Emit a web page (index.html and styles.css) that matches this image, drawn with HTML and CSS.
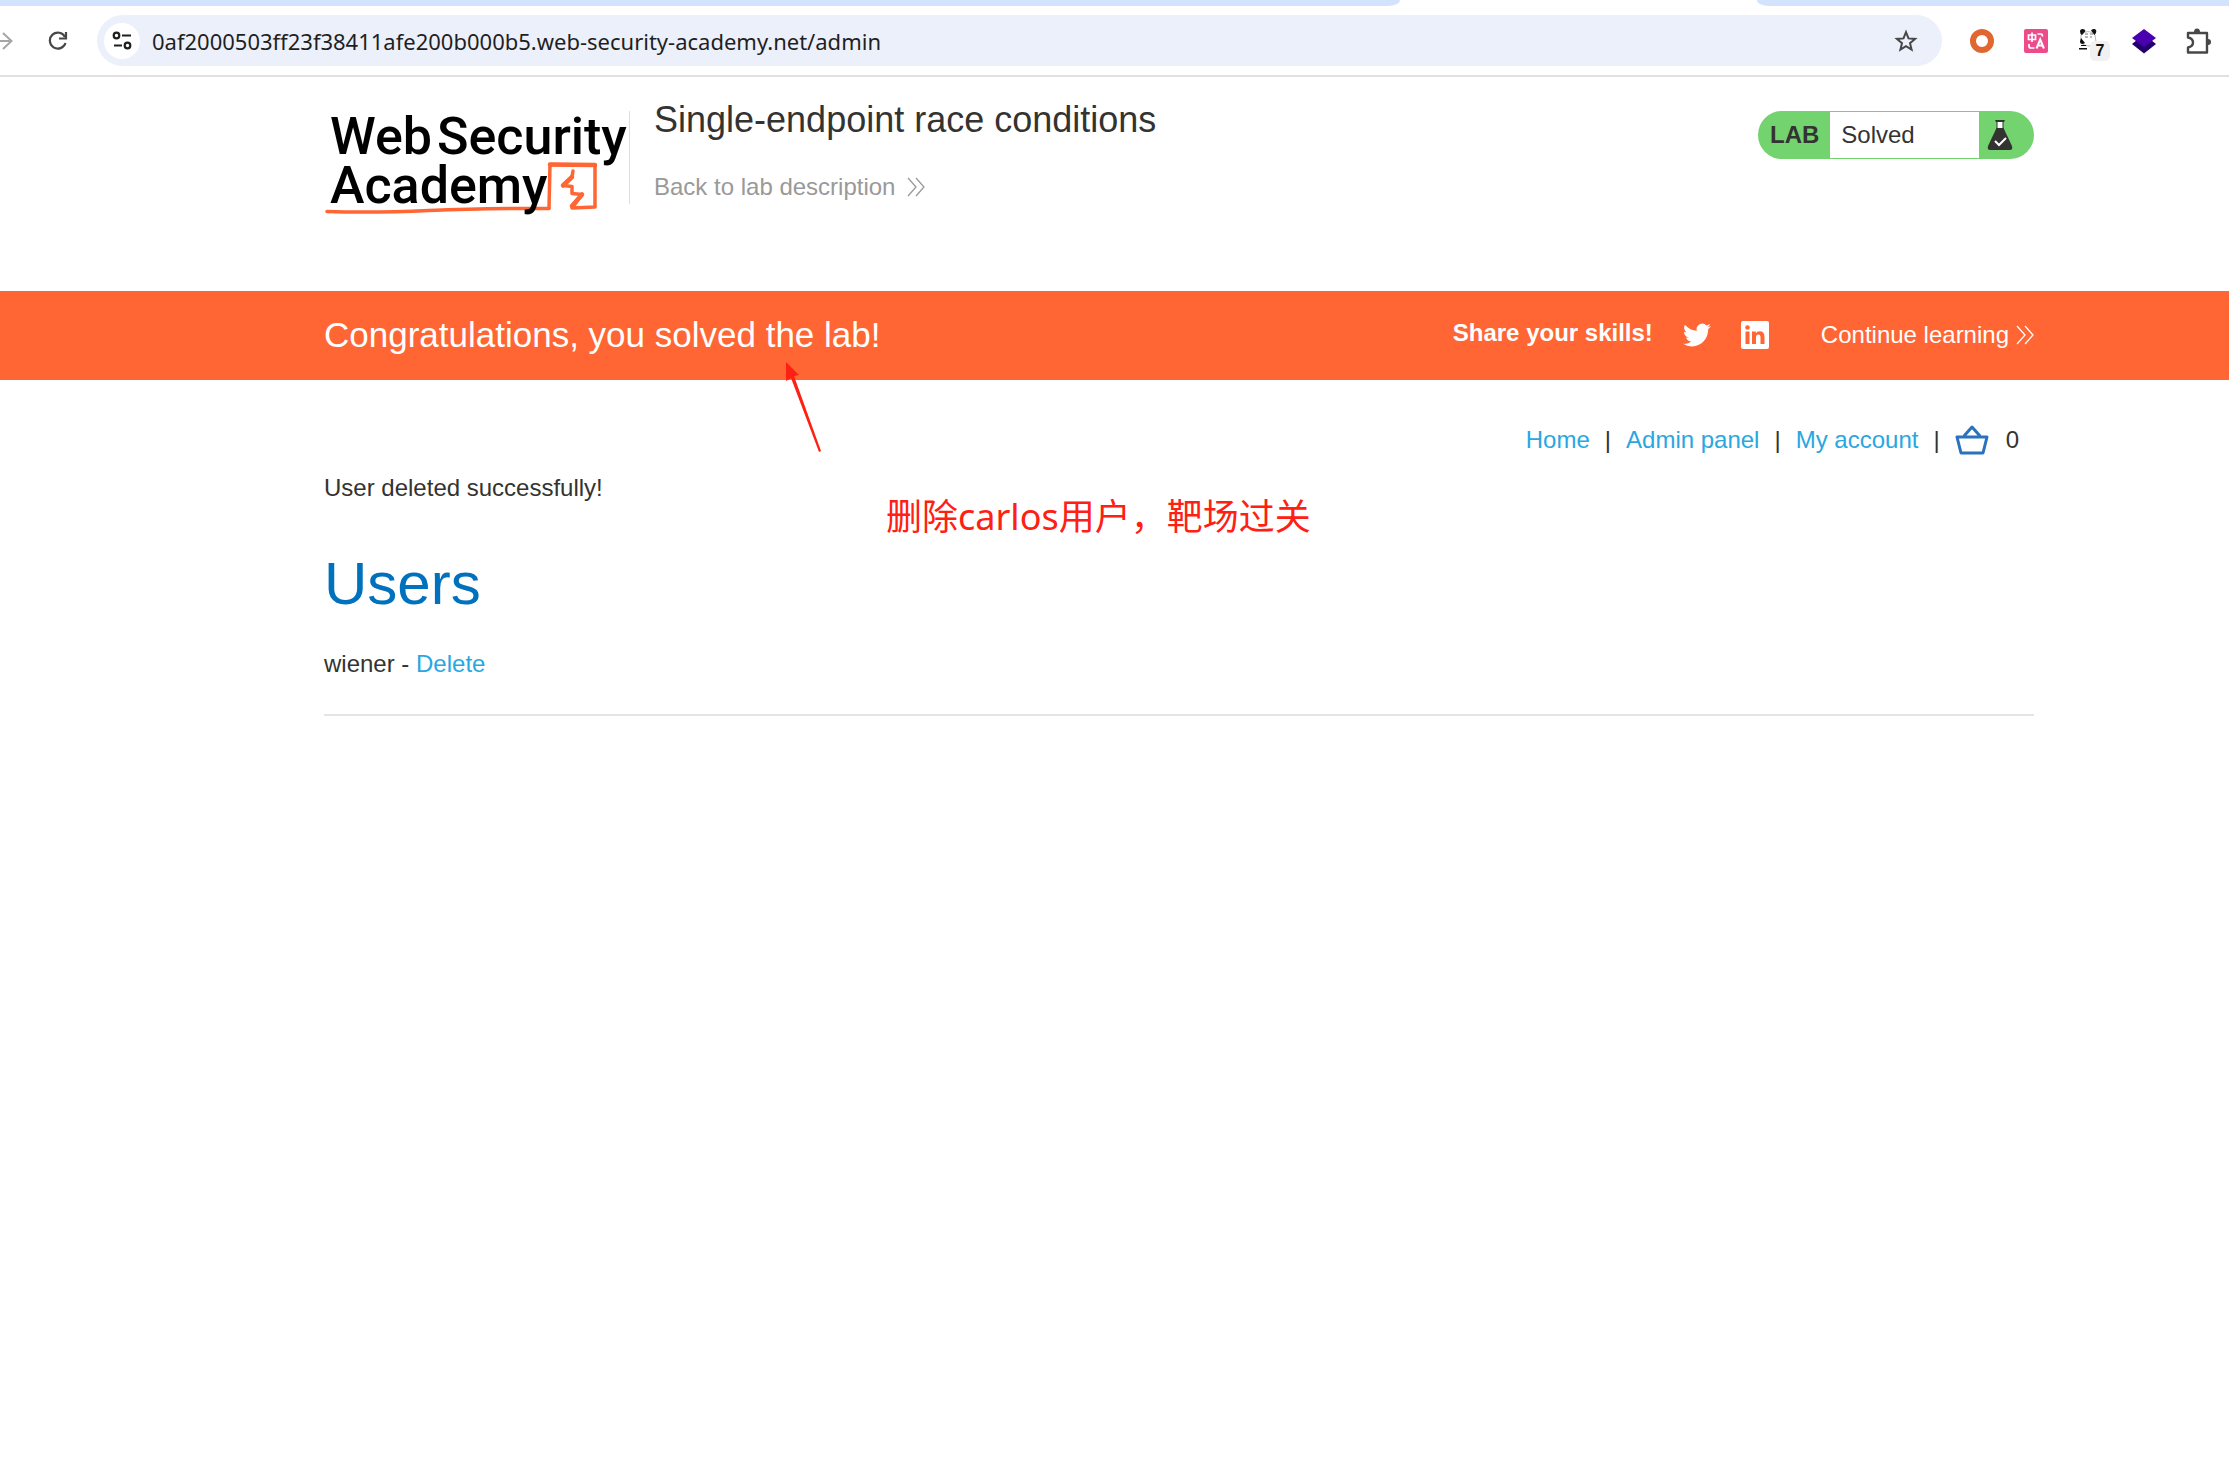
FILE: index.html
```html
<!DOCTYPE html>
<html lang="en">
<head>
    <meta charset="UTF-8">
    <meta name="viewport" content="width=device-width, initial-scale=1.0">
    <title>Single-endpoint race conditions</title>
    <link rel="stylesheet" href="styles.css">
</head>
<body>
    <div class="browser">
        <div class="tab-strip">
            <div class="tabs-before"></div>
            <div class="tabs-current"></div>
            <div class="tabs-after"></div>
        </div>
        <div class="toolbar">
            <button class="tool forward" aria-label="Forward">
                <svg width="14" height="20" viewBox="0 0 14 20" fill="none" stroke="#a6a6a6" stroke-width="2"><path d="M0 10h12M3 2l8.500 8L3 18"/></svg>
            </button>
            <button class="tool reload" aria-label="Reload">
                <svg width="20" height="20" viewBox="0 0 20 20" fill="none" stroke="#474747" stroke-width="2.200"><path d="M17 6A8 8 0 1 0 17.500 12"/><path d="M18 1v6.500h-7"/></svg>
            </button>
            <div class="address">
                <button class="site-info" aria-label="Site information">
                    <svg width="20" height="20" viewBox="0 0 20 20" fill="none" stroke="#1f1f1f" stroke-width="2.200"><circle cx="4.500" cy="4.500" r="2.800"/><path d="M10 4.500h9M2 14.500h8"/><circle cx="15.500" cy="14.500" r="2.800"/></svg>
                </button>
                <input class="url" type="text" aria-label="Address" value="0af2000503ff23f38411afe200b000b5.web-security-academy.net/admin">
                <button class="tool" aria-label="Bookmark this page">
                    <svg width="24" height="24" viewBox="0 0 24 24" fill="none" stroke="#474747" stroke-width="2"><path d="M12 3.200l2.500 6.200 6.600.5-5.100 4.300 1.600 6.500L12 17.200l-5.600 3.500L8 14.200 2.900 9.900l6.600-.5z"/></svg>
                </button>
            </div>
            <div class="extensions">
                <button class="extension" aria-label="Proxy">
                    <svg width="24" height="24" viewBox="0 0 24 24"><circle cx="12" cy="12" r="9" fill="none" stroke="#e0672f" stroke-width="6"/></svg>
                </button>
                <button class="extension" aria-label="Translate">
                    <svg width="24" height="24" viewBox="0 0 24 24"><rect width="24" height="24" rx="2" fill="#ee4b8b"/><g fill="none" stroke="#fff" stroke-width="1.700"><path d="M4.500 6h7v4.500h-7zM8 3.500v9.500M13.500 5h3.500q1.500 0 1.500 2.500M5 15v2q0 2 2 2h3.500"/><path d="M12.500 19.500l3.700-9 3.700 9M13.800 16.500h4.800" stroke-width="2"/></g></svg>
                </button>
                <button class="extension" aria-label="Panda, 7 items">
                    <svg width="32" height="32" viewBox="0 0 32 32"><path d="M7 10q7-7 14 0l1 7q-3 4-7 4t-8-3z" fill="#fff" stroke="#bbb" stroke-width="1"/><g fill="#111"><path d="M6 6.500q0-2.500 2.500-2.500t3 2L8 10q-2-1-2-3.500zM17 5.500q1-2 3.500-1.500T22 8l-1.500 2zM7 13l4 5-2 1q-3 0-3-2.500z"/><path d="M7 20h5v1H7zM5 23h8v1.500H5z"/></g><path d="M11 9h3M16 9h3M11 12h3M16 12h2" stroke="#777"/></svg>
                    <span class="count">7</span>
                </button>
                <button class="extension" aria-label="Layers">
                    <svg width="26" height="26" viewBox="0 0 26 26"><path d="M1 16l5-4 14 0 5 4-12 9.500z" fill="#22006b"/><path d="M13 1l12 9-12 9L1 10z" fill="#4a00b0"/></svg>
                </button>
                <button class="extension" aria-label="Extensions">
                    <svg width="26" height="28" viewBox="0 0 26 28"><path d="M3 6h19v19.500H3v-5q5-1 5-5t-5-5z" fill="none" stroke="#474747" stroke-width="2.400" stroke-linejoin="round"/><path d="M9 5a3 3.500 0 0 1 6 0zM23 12a3 3 0 0 1 0 6z" fill="#474747"/></svg>
                </button>
            </div>
        </div>
    </div>

    <header class="lab-header">
        <a href="#" class="logo" aria-label="Web Security Academy">
            <svg width="304" height="120" viewBox="0 -12 304 120">
                <g fill="none" stroke="#ff6633" stroke-linejoin="round" stroke-linecap="round">
                    <path d="M3 100.500Q50 102 105 99.500T225 97.500" stroke-width="3.500"/>
                    <path d="M225 97L226 53.500L271 54V96L248 97L258 83.500L248 82.500L248 75.500L239 74.500L248 66L249 60" stroke-width="3.500"/>
                    <path d="M226 53.500L271 54" stroke-width="4.500"/>
                    <path d="M239 74.500L248 66M248 95L258 83.500" stroke-width="4.500"/>
                </g>
                <g class="logo-text">
                    <text x="6" y="43">Web</text>
                    <text x="113" y="43">Security</text>
                    <text x="6" y="92">Academy</text>
                </g>
            </svg>
        </a>
        <div class="lab-title">
            <h2>Single-endpoint race conditions</h2>
            <a href="#" class="back">Back to lab description
                <svg width="18" height="20" viewBox="0 0 18 20" fill="none" stroke="#999" stroke-width="1.300"><path d="M1 1l8 9-8 9M9 1l8 9-8 9"/></svg>
            </a>
        </div>
        <div class="lab-status">
            <strong>LAB</strong>
            <span class="state">Solved</span>
            <svg width="26" height="32" viewBox="0 0 26 32"><path d="M10 3h6v8h-6z" fill="#fff"/><path d="M8 1h10l-1 2H9z" fill="#333332"/><path d="M10 2v8M16 2v8" fill="none" stroke="#333332" stroke-width="1"/><path d="M9.500 9h7L25 27q1 4-2 4H3q-3 0-2-4z" fill="#333332"/><path d="M8 22l4 4 7-7" fill="none" stroke="#fff" stroke-width="2"/></svg>
        </div>
    </header>

    <section class="banner">
        <h3>Congratulations, you solved the lab!</h3>
        <span class="share">Share your skills!</span>
        <a href="#" class="social" aria-label="Twitter">
            <svg width="28" height="28" viewBox="0 0 24 24" fill="#fff"><path d="M23.953 4.570a10 10 0 01-2.825.775 4.958 4.958 0 002.163-2.723c-.951.555-2.005.959-3.127 1.184a4.920 4.920 0 00-8.384 4.482C7.690 8.095 4.067 6.130 1.640 3.162a4.822 4.822 0 00-.666 2.475c0 1.710.870 3.213 2.188 4.096a4.904 4.904 0 01-2.228-.616v.060a4.923 4.923 0 003.946 4.827 4.996 4.996 0 01-2.212.085 4.936 4.936 0 004.604 3.417 9.867 9.867 0 01-6.102 2.105c-.390 0-.779-.023-1.170-.067a13.995 13.995 0 007.557 2.209c9.053 0 13.998-7.496 13.998-13.985 0-.210 0-.420-.015-.630A9.935 9.935 0 0024 4.590z"/></svg>
        </a>
        <a href="#" class="social" aria-label="LinkedIn">
            <svg width="28" height="28" viewBox="0 0 28 28"><rect width="28" height="28" rx="2" fill="#fff"/><g fill="#ff6633"><circle cx="6.500" cy="6.500" r="2.300"/><path d="M4.500 10.500h4V23h-4zM11 10.500h3.800v1.700q1.300-2 3.900-2 4.800 0 4.800 5.800v7h-4v-6.200q0-3.200-2.200-3.200-2.300 0-2.300 3.200V23h-4z"/></g></svg>
        </a>
        <a href="#" class="continue">Continue learning
            <svg width="18" height="20" viewBox="0 0 18 20" fill="none" stroke="#fff" stroke-width="1.300"><path d="M1 1l8 9-8 9M9 1l8 9-8 9"/></svg>
        </a>
    </section>

    <main class="page">
        <nav class="top-links">
            <a href="#">Home</a><span>|</span>
            <a href="#">Admin panel</a><span>|</span>
            <a href="#">My account</a><span>|</span>
            <a href="#" class="basket" aria-label="Basket">
                <svg width="34" height="30" viewBox="0 0 34 30" fill="none" stroke="#2b71bd" stroke-width="3" stroke-linejoin="round"><path d="M2 12h30l-4 16H6zM9 11l8-9 8 9"/></svg>
            </a>
            <span class="basket-count">0</span>
        </nav>
        <p class="message">User deleted successfully!</p>
        <h1>Users</h1>
        <div class="user">wiener - <a href="#">Delete</a></div>
        <hr>
    </main>

    <!-- red marker drawn over the page -->
    <svg class="arrow" width="38" height="94" viewBox="0 0 38 94"><path d="M1 1L14 14L9 15L36 90L34 91L6 17L1 20z" fill="#ff2014"/></svg>
    <div class="note" lang="zh">删除carlos用户，靶场过关</div>
</body>
</html>
```
FILE: styles.css
```css
body {
    margin: 0;
    background: #fff;
    color: #333332;
    font-family: "Liberation Sans", Arial, sans-serif;
    font-size: 24px;
    line-height: 28px;
    position: relative;
}
h1, h2, h3, p {
    margin: 0;
    font-weight: normal;
}
a {
    color: #29a7e1;
    text-decoration: none;
}
button {
    border: none;
    background: none;
    padding: 0;
    display: flex;
    align-items: center;
    justify-content: center;
    cursor: pointer;
}
svg {
    display: block;
    flex: none;
}

/* browser bar */
.tab-strip {
    display: flex;
    height: 6px;
}
.tabs-before, .tabs-after {
    background: #d3e3fd;
}
.tabs-before {
    flex: 1;
    border-bottom-right-radius: 12px 6px;
}
.tabs-current {
    width: 357px;
}
.tabs-after {
    width: 472px;
    border-bottom-left-radius: 12px 6px;
}
.toolbar {
    display: flex;
    align-items: center;
    height: 69px;
    padding-right: 4px;
    border-bottom: 2px solid #e0e0e0;
}
.reload {
    margin: 0 29px 0 34px;
}
.address {
    flex: 1;
    display: flex;
    align-items: center;
    height: 51px;
    margin-right: 13px;
    padding: 0 24px 0 7px;
    box-sizing: border-box;
    border-radius: 26px;
    background: #ecf0fa;
}
.site-info {
    width: 36px;
    height: 36px;
    border-radius: 50%;
    background: #fff;
}
.url {
    flex: 1;
    margin-left: 12px;
    padding: 0;
    border: none;
    outline: none;
    background: none;
    color: #1f1f1f;
    font-family: "Noto Sans", sans-serif;
    font-size: 22px;
}
.extensions {
    display: flex;
}
.extension {
    position: relative;
    width: 54px;
    height: 40px;
}
.count {
    position: absolute;
    right: 7px;
    bottom: 0;
    width: 20px;
    border-radius: 5px;
    background: #f1f1f1;
    color: #111;
    font: bold 16px/20px "Liberation Sans", Arial, sans-serif;
}

/* lab header */
.lab-header {
    display: flex;
    align-items: flex-start;
    height: 192px;
    padding: 22px 195px 0 324px;
}
.logo {
    display: flex;
    align-items: flex-end;
    height: 108px;
    margin: 12px 0 -15px;
    padding-right: 2px;
    background: linear-gradient(#dedede, #dedede) right top / 1px 93px no-repeat;
}
.logo-text {
    font-family: Roboto, sans-serif;
    font-size: 52px;
    font-weight: 500;
    fill: #000;
}
.lab-title {
    flex: 1;
    margin-left: 24px;
}
.lab-title h2 {
    font-size: 36px;
    line-height: 42px;
    margin-bottom: 32px;
}
.back, .continue {
    display: inline-flex;
    align-items: center;
}
.back {
    gap: 12px;
    color: #999;
}
.lab-status {
    display: flex;
    align-items: center;
    margin-top: 12px;
    width: 276px;
    height: 48px;
    box-sizing: border-box;
    padding: 1px 21px 1px 12px;
    border-radius: 24px;
    background: #73d36f;
}
.state {
    flex: 1;
    margin: 0 8px 0 11px;
    padding-left: 11px;
    line-height: 46px;
    background: #fff;
}

.banner {
    display: flex;
    align-items: center;
    height: 87px;
    padding: 0 195px 2px 324px;
    background: #ff6633;
    color: #fff;
}
.banner h3 {
    flex: 1;
    font-size: 35px;
    line-height: 40px;
}
.share {
    font-weight: bold;
    padding-bottom: 4px;
}
.social {
    margin-left: 30px;
}
.continue {
    gap: 7px;
    margin-left: 52px;
    color: #fff;
}

.page {
    padding: 46px 195px 0 324px;
}
.top-links {
    display: flex;
    align-items: center;
    justify-content: flex-end;
    gap: 15px;
    height: 28px;
    padding-right: 15px;
}
.basket-count {
    margin-left: 2px;
}
.message {
    margin-top: 20px;
}
h1 {
    margin: 48px 0 32px;
    color: #0071bc;
    font-size: 60px;
    line-height: 68px;
}
hr {
    margin: 36px 0 0;
    border: none;
    border-top: 2px solid #e4e4e4;
}

.arrow {
    position: absolute;
    left: 785px;
    top: 361px;
}
.note {
    position: absolute;
    left: 886px;
    top: 493px;
    color: #ff2014;
    font-family: "Noto Sans", "Noto Sans CJK SC", sans-serif;
    font-size: 36px;
    line-height: 48px;
}
```
